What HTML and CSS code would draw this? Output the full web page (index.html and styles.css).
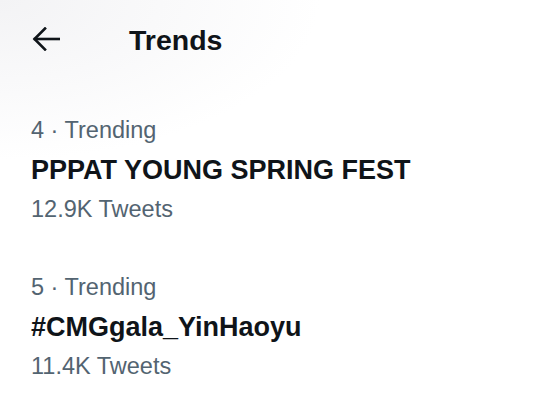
FILE: index.html
```html
<!DOCTYPE html>
<html lang="en">
<head>
<meta charset="utf-8">
<title>Trends</title>
<link rel="stylesheet" href="styles.css">
</head>
<body>
<div class="page">
  <header class="header">
    <button class="back" aria-label="Back">
      <svg width="28" height="24" viewBox="0 0 28 24" fill="none" stroke="#0f1419" stroke-width="2.6" stroke-linecap="square" stroke-linejoin="miter">
        <path d="M3 12H27"/>
        <path d="M13 1.5L2.5 12L13 22.5"/>
      </svg>
    </button>
    <h1 class="title">Trends</h1>
  </header>
  <main class="list">
    <div class="trend">
      <div class="meta">4 · Trending</div>
      <div class="name">PPPAT YOUNG SPRING FEST</div>
      <div class="count">12.9K Tweets</div>
    </div>
    <div class="trend">
      <div class="meta">5 · Trending</div>
      <div class="name">#CMGgala_YinHaoyu</div>
      <div class="count">11.4K Tweets</div>
    </div>
  </main>
</div>
</body>
</html>
```

FILE: styles.css
```css
html, body {
  margin: 0;
  padding: 0;
  background: #ffffff;
}

.page {
  width: 548px;
  height: 412px;
  overflow: hidden;
  font-family: "Liberation Sans", Arial, sans-serif;
  color: #0f1419;
  background: radial-gradient(ellipse 320px 160px at 0 0, #f3f3f5 0%, #f9f9fa 50%, #ffffff 100%);
}

.header {
  display: flex;
  align-items: center;
  height: 80px;
  padding-left: 32px;
  box-sizing: border-box;
}

.back {
  display: flex;
  align-items: center;
  padding: 0;
  margin: 0 0 2px 0;
  border: 0;
  background: none;
  width: 97px;
}

.title {
  margin: 0;
  font-size: 28.5px;
  line-height: 32px;
  font-weight: 700;
}

.list {
  display: flex;
  flex-direction: column;
  gap: 39px;
  padding: 30px 0 0 31px;
}

.trend {
  display: flex;
  flex-direction: column;
}

.meta, .count {
  font-size: 23.5px;
  color: #536471;
}

.meta {
  line-height: 40px;
}

.name {
  font-size: 27px;
  line-height: 40px;
  font-weight: 700;
}

.count {
  line-height: 38px;
}
```
